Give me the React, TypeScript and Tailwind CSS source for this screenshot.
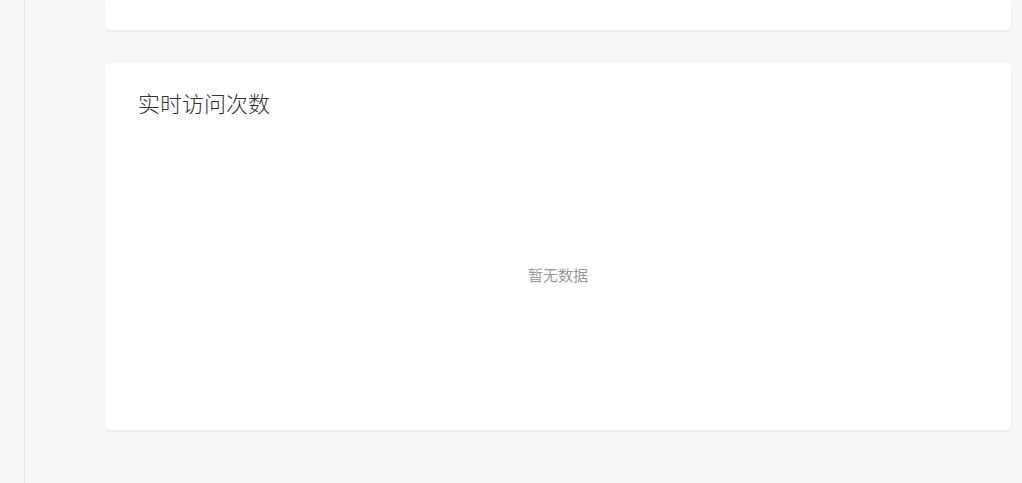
export default function App() {
  return (
    <div className="flex h-[483px] w-[1022px] overflow-hidden bg-[#f5f7f9] font-['Noto_Sans_CJK_SC',sans-serif]">
      <aside className="w-[25px] shrink-0 border-r border-[#e4e6ea] bg-[#f6f7f9]" />
      <main className="flex flex-1 flex-col gap-[33px] pl-[80px] pr-[11px]">
        <section className="h-[30px] rounded-b-[4px] bg-white shadow-[0_1px_2px_rgba(0,0,0,0.08)]" />
        <section className="flex h-[367px] flex-col rounded-[4px] bg-white px-[33px] pt-[28px] shadow-[0_1px_2px_rgba(0,0,0,0.08)]">
          <h2 className="text-[22px] leading-[22px] font-light text-[#333]">实时访问次数</h2>
          <div className="mt-[17px] flex h-[290px] items-center justify-center">
            <span className="text-[15px] text-[#999]">暂无数据</span>
          </div>
        </section>
      </main>
    </div>
  );
}
